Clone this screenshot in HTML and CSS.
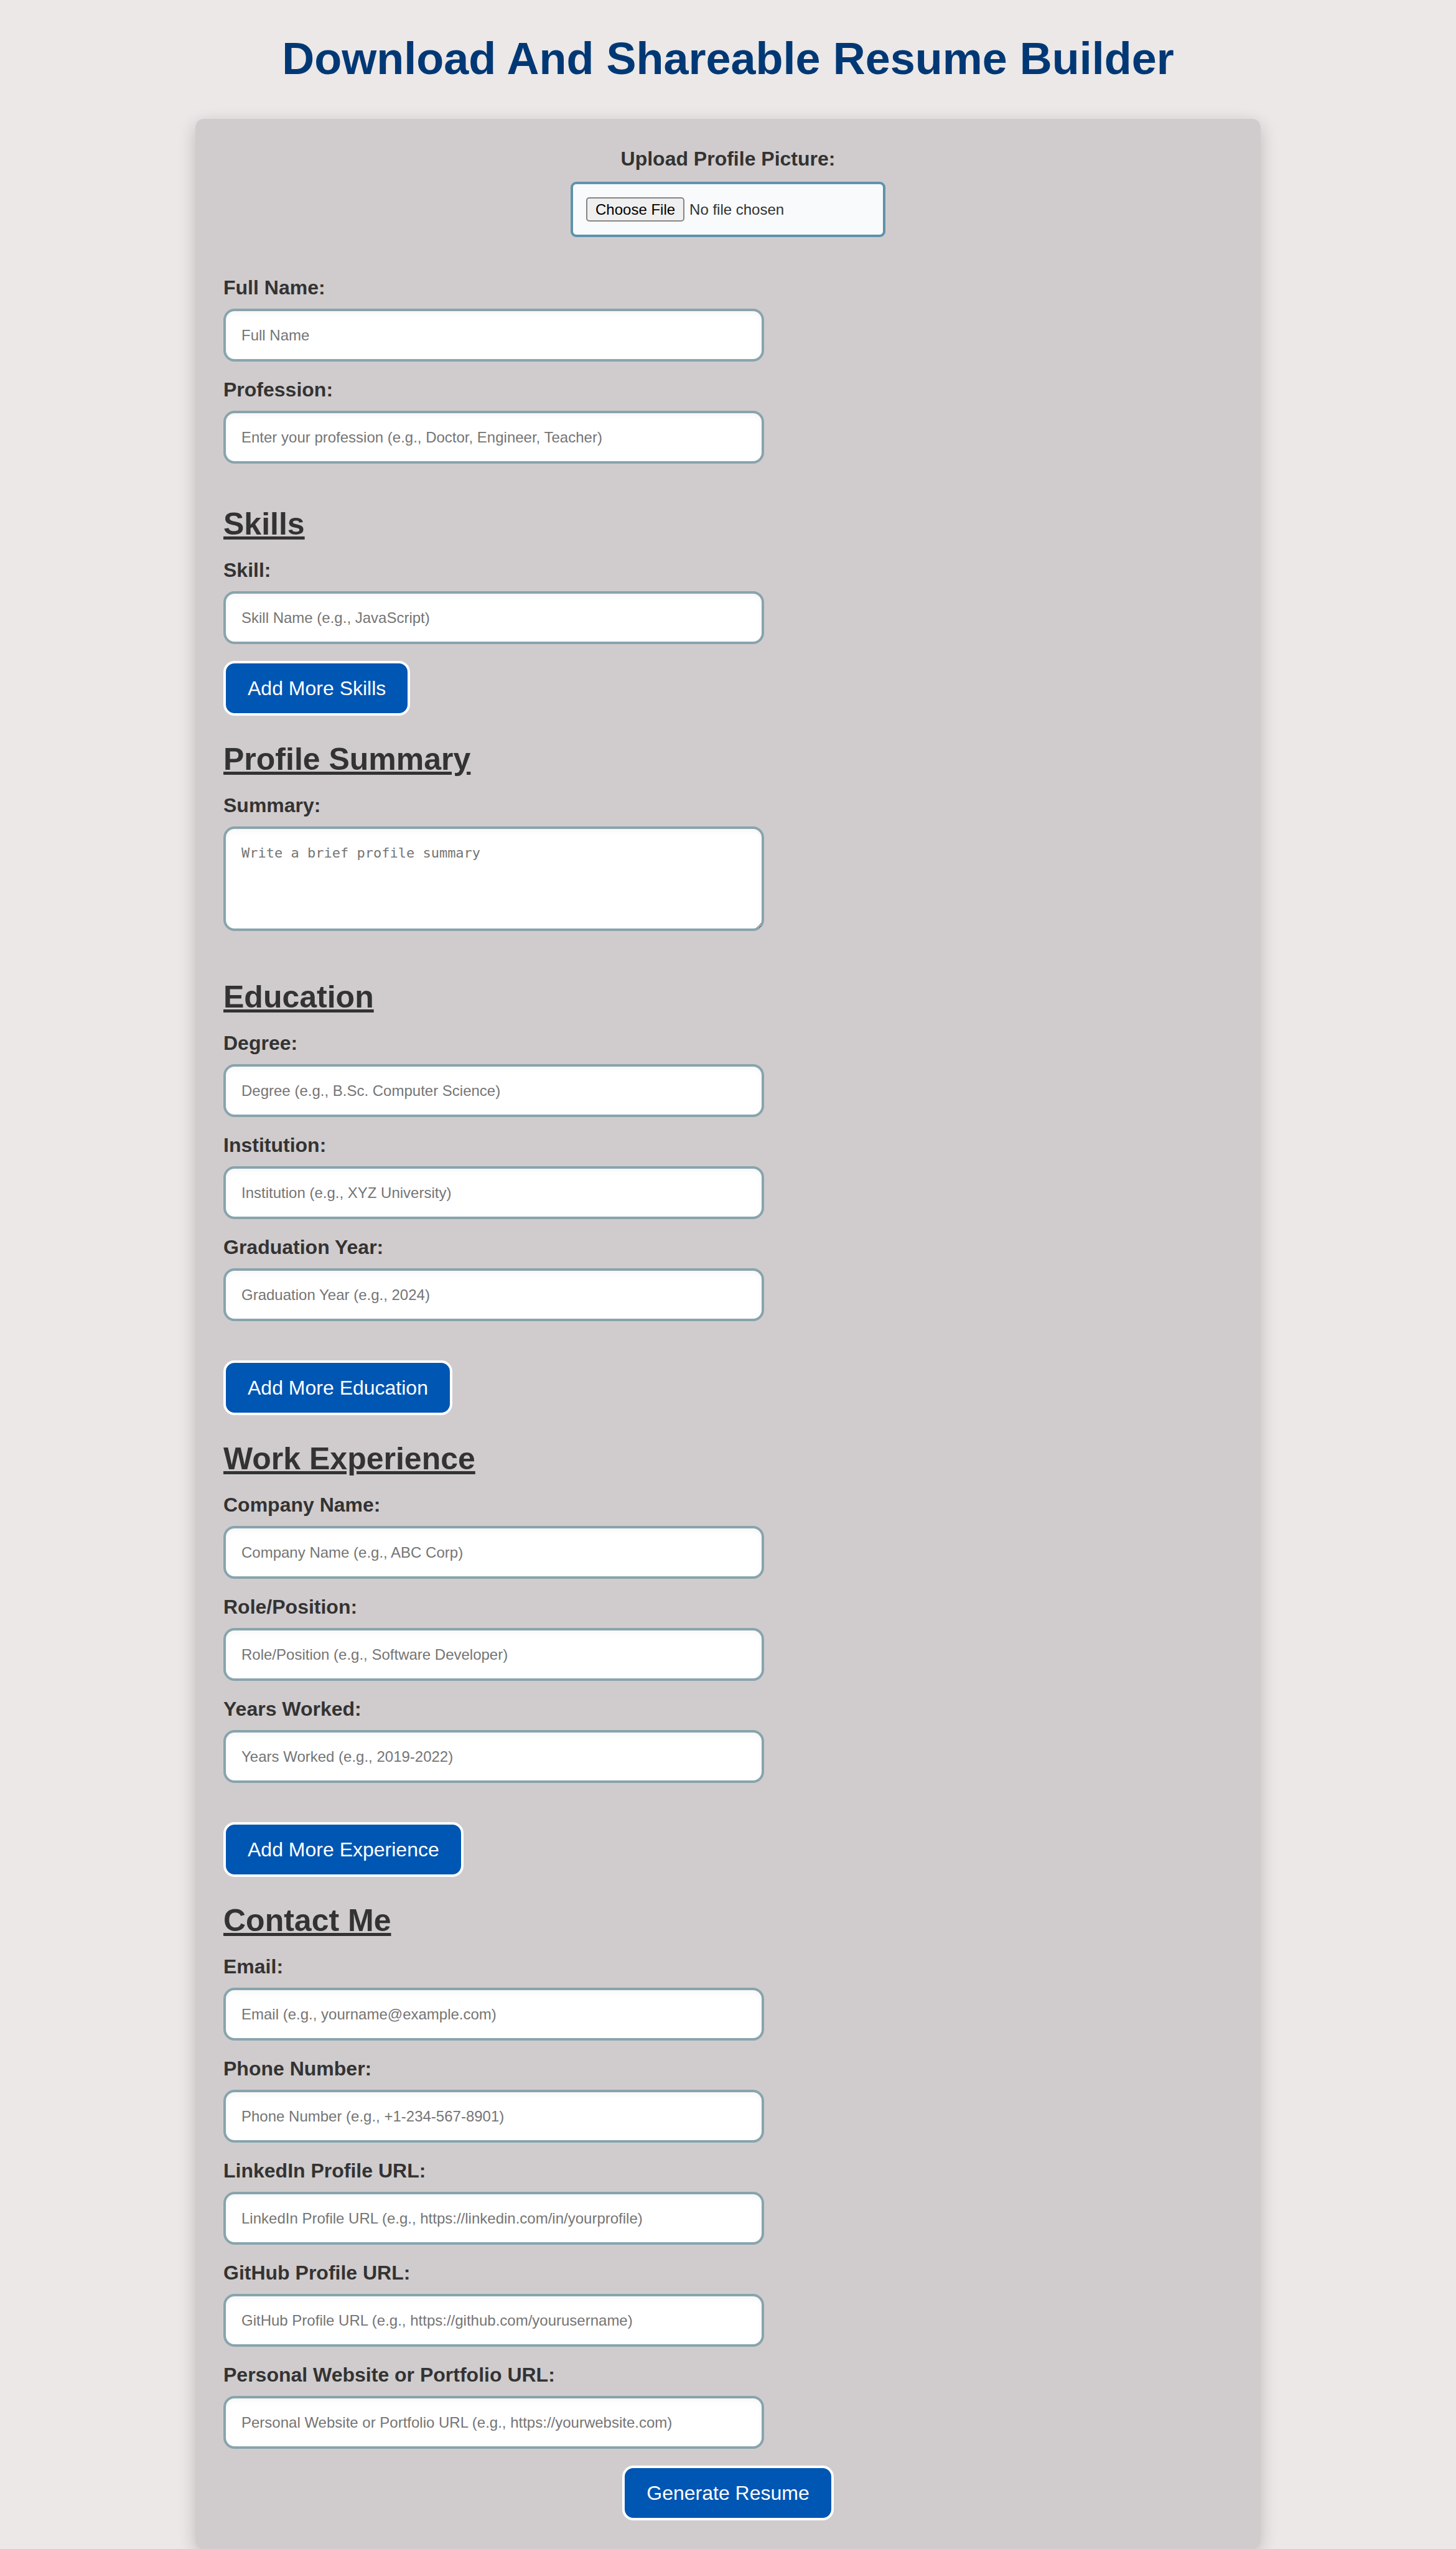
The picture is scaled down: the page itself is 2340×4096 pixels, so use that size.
FILE: index.html
```html
<!DOCTYPE html>
<html lang="en">
<head>
  <meta charset="UTF-8">
  <meta name="viewport" content="width=device-width, initial-scale=1.0">
  <title>Resume Builder</title>
  <link rel="stylesheet" href="styles.css">
</head>
<body>
  <h1 class="page-title">Download And Shareable Resume Builder</h1>

  <form class="builder">
    <div class="upload">
      <label class="label" for="picture">Upload Profile Picture:</label>
      <input class="file-input" type="file" id="picture" accept="image/*">
    </div>

    <section class="fields">
      <div class="field">
        <label class="label" for="name">Full Name:</label>
        <input class="control" type="text" id="name" placeholder="Full Name">
      </div>
      <div class="field">
        <label class="label" for="profession">Profession:</label>
        <input class="control" type="text" id="profession" placeholder="Enter your profession (e.g., Doctor, Engineer, Teacher)">
      </div>
    </section>

    <section class="fields after-fields">
      <h2 class="heading">Skills</h2>
      <div class="field">
        <label class="label" for="skill">Skill:</label>
        <input class="control" type="text" id="skill" placeholder="Skill Name (e.g., JavaScript)">
      </div>
      <button class="button" type="button">Add More Skills</button>
    </section>

    <section class="fields after-button">
      <h2 class="heading">Profile Summary</h2>
      <div class="field">
        <label class="label" for="summary">Summary:</label>
        <textarea class="control summary" id="summary" placeholder="Write a brief profile summary"></textarea>
      </div>
    </section>

    <section class="fields after-summary">
      <h2 class="heading">Education</h2>
      <div class="field">
        <label class="label" for="degree">Degree:</label>
        <input class="control" type="text" id="degree" placeholder="Degree (e.g., B.Sc. Computer Science)">
      </div>
      <div class="field">
        <label class="label" for="institution">Institution:</label>
        <input class="control" type="text" id="institution" placeholder="Institution (e.g., XYZ University)">
      </div>
      <div class="field">
        <label class="label" for="graduation">Graduation Year:</label>
        <input class="control" type="text" id="graduation" placeholder="Graduation Year (e.g., 2024)">
      </div>
      <button class="button after-group" type="button">Add More Education</button>
    </section>

    <section class="fields after-button">
      <h2 class="heading">Work Experience</h2>
      <div class="field">
        <label class="label" for="company">Company Name:</label>
        <input class="control" type="text" id="company" placeholder="Company Name (e.g., ABC Corp)">
      </div>
      <div class="field">
        <label class="label" for="role">Role/Position:</label>
        <input class="control" type="text" id="role" placeholder="Role/Position (e.g., Software Developer)">
      </div>
      <div class="field">
        <label class="label" for="years">Years Worked:</label>
        <input class="control" type="text" id="years" placeholder="Years Worked (e.g., 2019-2022)">
      </div>
      <button class="button after-group" type="button">Add More Experience</button>
    </section>

    <section class="fields after-button">
      <h2 class="heading">Contact Me</h2>
      <div class="field">
        <label class="label" for="email">Email:</label>
        <input class="control" type="email" id="email" placeholder="Email (e.g., yourname@example.com)">
      </div>
      <div class="field">
        <label class="label" for="phone">Phone Number:</label>
        <input class="control" type="tel" id="phone" placeholder="Phone Number (e.g., +1-234-567-8901)">
      </div>
      <div class="field">
        <label class="label" for="linkedin">LinkedIn Profile URL:</label>
        <input class="control" type="url" id="linkedin" placeholder="LinkedIn Profile URL (e.g., https://linkedin.com/in/yourprofile)">
      </div>
      <div class="field">
        <label class="label" for="github">GitHub Profile URL:</label>
        <input class="control" type="url" id="github" placeholder="GitHub Profile URL (e.g., https://github.com/yourusername)">
      </div>
      <div class="field">
        <label class="label" for="website">Personal Website or Portfolio URL:</label>
        <input class="control" type="url" id="website" placeholder="Personal Website or Portfolio URL (e.g., https://yourwebsite.com)">
      </div>
      <button class="button submit" type="submit">Generate Resume</button>
    </section>
  </form>
</body>
</html>
```

FILE: styles.css
```css
body {
  margin: 0;
  padding: 53px 36px 0;
  background: #ece8e7;
  color: #333;
  font-family: "Liberation Sans", Arial, sans-serif;
}

.page-title {
  margin: 0 0 55px;
  color: #003875;
  font-size: 72px;
  line-height: 83px;
  text-align: center;
}

.builder {
  box-sizing: border-box;
  max-width: 1712px;
  margin: 0 auto;
  padding: 46px 45px;
  border-radius: 14px;
  background: #d0cccd;
  box-shadow: 0 8px 28px rgba(0, 0, 0, 0.2);
}

.upload {
  display: flex;
  flex-direction: column;
  align-items: center;
  gap: 18px;
  margin-bottom: 63px;
}

.label {
  font-size: 32px;
  font-weight: bold;
  line-height: 37px;
}

.file-input {
  box-sizing: border-box;
  width: 506px;
  max-width: 100%;
  padding: 21px;
  border: 4px solid #5e93ac;
  border-radius: 9px;
  background: #f8fafc;
  color: #333;
  font-family: inherit;
  font-size: 24px;
}

.file-input::file-selector-button {
  margin-right: 8px;
  padding: 4px 13px;
  border: 2px solid #858585;
  border-radius: 5px;
  background: #efefef;
  color: #000;
  font-family: inherit;
  font-size: 24px;
  line-height: 27px;
}

.fields {
  display: flex;
  flex-direction: column;
  align-items: flex-start;
  gap: 27px;
}

.after-fields {
  margin-top: 69px;
}

.after-button {
  margin-top: 42px;
}

.after-summary {
  margin-top: 78px;
}

.heading {
  margin: 0;
  font-size: 50px;
  line-height: 57px;
  text-decoration: underline;
}

.field {
  display: flex;
  flex-direction: column;
  align-items: flex-start;
  gap: 15px;
  width: 100%;
}

.control {
  width: 50%;
  height: 27px;
  padding: 25px;
  border: 4px solid #88a4ad;
  border-radius: 18px;
  background: #fff;
  box-shadow: inset 0 4px 8px rgba(0, 0, 0, 0.04);
  color: #333;
  font-family: inherit;
  font-size: 24px;
  line-height: 27px;
}

.control::placeholder {
  color: #757575;
}

.summary {
  height: 110px;
  font-family: "DejaVu Sans Mono", monospace;
  font-size: 22px;
}

.button {
  padding: 21px 35px;
  border: 4px solid #fff;
  border-radius: 18px;
  background: #0056b3;
  color: #fff;
  font-family: inherit;
  font-size: 32px;
  line-height: 38px;
  cursor: pointer;
}

.after-group {
  margin-top: 36px;
}

.submit {
  align-self: center;
}
```
